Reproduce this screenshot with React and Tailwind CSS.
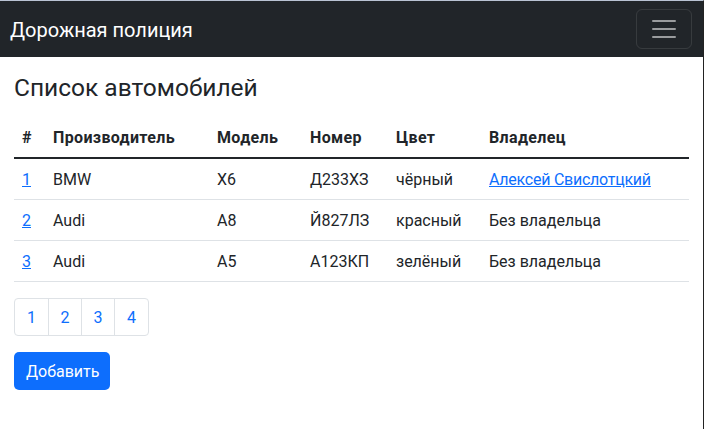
import React from "react";

const rows = [
  { id: 1, make: "BMW", model: "X6", plate: "Д233ХЗ", color: "чёрный", owner: "Алексей Свислотцкий", link: true },
  { id: 2, make: "Audi", model: "A8", plate: "Й827ЛЗ", color: "красный", owner: "Без владельца", link: false },
  { id: 3, make: "Audi", model: "A5", plate: "А123КП", color: "зелёный", owner: "Без владельца", link: false },
];

const pageW = ["w-[35px]", "w-[34px]", "w-[34px]", "w-[35px]"];

export default function App() {
  return (
    <div
      className="w-[704px] h-[429px] bg-white border-t border-t-[#b9c3d3] border-r border-r-[#222] text-[#212529] overflow-hidden"
      style={{ fontFamily: 'Roboto, "Noto Sans", sans-serif' }}
    >
      <nav className="bg-[#212529] h-[56px] flex items-center justify-between pl-[10px] pr-[11px]">
        <span className="text-white text-[20px] leading-[30px] pt-px">Дорожная полиция</span>
        <button className="w-[56px] h-[40px] border border-white/10 rounded-[6px] flex items-center justify-center">
          <svg width="30" height="30" viewBox="0 0 30 30">
            <path d="M4 7h22M4 15h22M4 23h22" stroke="rgba(255,255,255,0.55)" strokeWidth="2" strokeLinecap="round" />
          </svg>
        </button>
      </nav>
      <div className="px-[14px] pt-[16px]">
        <h3 className="text-[24.5px] leading-[30px] mb-[14px]">Список автомобилей</h3>
        <table className="w-[675px] text-[16px] leading-[24px] mb-4">
          <colgroup>
            <col className="w-[31px]" />
            <col className="w-[164px]" />
            <col className="w-[93px]" />
            <col className="w-[86px]" />
            <col className="w-[93px]" />
            <col />
          </colgroup>
          <thead>
            <tr className="border-b-2 border-b-[#212529]">
              {["#", "Производитель", "Модель", "Номер", "Цвет", "Владелец"].map((h) => (
                <th key={h} className="text-left font-bold tracking-[0.35px] px-2 pt-[9px] pb-[7px]">{h}</th>
              ))}
            </tr>
          </thead>
          <tbody>
            {rows.map((r) => (
              <tr key={r.id} className="border-b border-b-[#dee2e6]">
                <td className="px-2 pt-[9px] pb-[7px]">
                  <a href="#" className="text-[#0d6efd] underline">{r.id}</a>
                </td>
                <td className="px-2 pt-[9px] pb-[7px]">{r.make}</td>
                <td className="px-2 pt-[9px] pb-[7px]">{r.model}</td>
                <td className="px-2 pt-[9px] pb-[7px]">{r.plate}</td>
                <td className="px-2 pt-[9px] pb-[7px]">{r.color}</td>
                <td className="px-2 pt-[9px] pb-[7px]">
                  {r.link ? (
                    <a href="#" className="text-[#0d6efd] underline tracking-[-0.25px]">{r.owner}</a>
                  ) : (
                    r.owner
                  )}
                </td>
              </tr>
            ))}
          </tbody>
        </table>
        <div className="flex mb-4">
          {[1, 2, 3, 4].map((n, i) => (
            <a
              key={n}
              href="#"
              className={`block h-[38px] ${pageW[i]} text-center leading-[36px] pt-px text-[16px] text-[#0d6efd] border border-[#dee2e6] ${i === 0 ? "rounded-l-[4px]" : "-ml-px"} ${i === 3 ? "rounded-r-[4px]" : ""}`}
            >
              {n}
            </a>
          ))}
        </div>
        <button className="h-[38px] px-3 pt-px bg-[#0d6efd] text-white text-[16px] rounded-[5px] w-[96px]">
          Добавить
        </button>
      </div>
    </div>
  );
}
